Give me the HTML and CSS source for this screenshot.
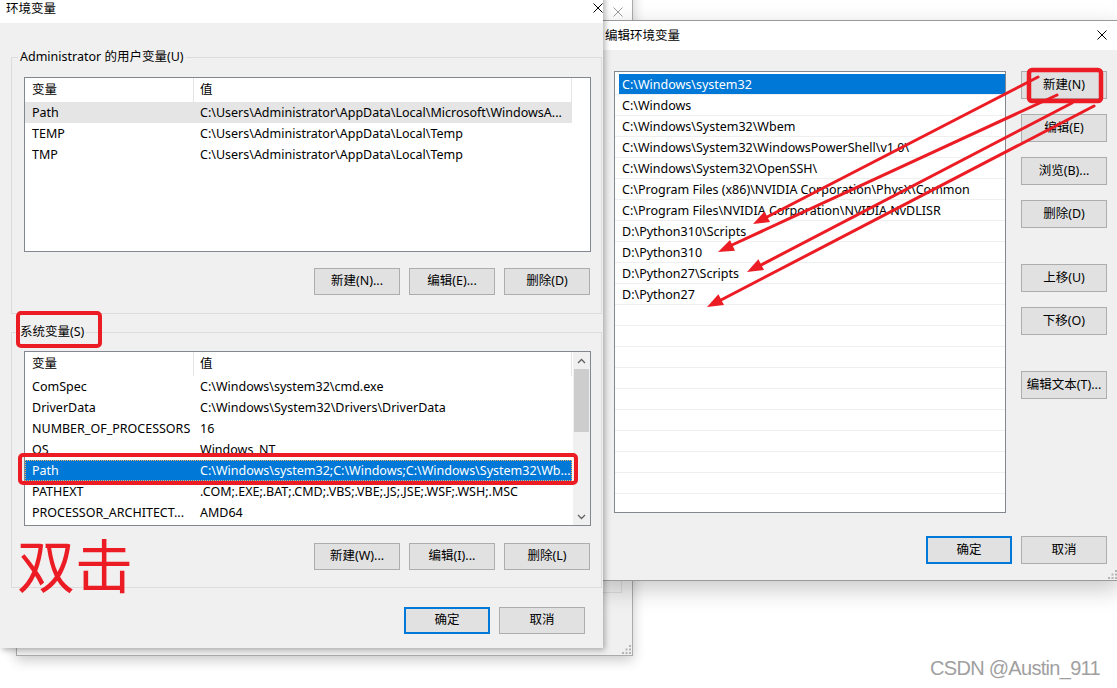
FILE: index.html
```html
<!DOCTYPE html>
<html lang="zh-CN">
<head>
<meta charset="utf-8">
<title>环境变量</title>
<link rel="stylesheet" href="styles.css">
</head>
<body>
<div class="desk">

  <div class="win back">
    <div class="back-title">
      <svg class="xicon" width="10" height="10" viewBox="0 0 10 10"><path d="M0.5 0.5L9.5 9.5M9.5 0.5L0.5 9.5" stroke="#9a9a9a" stroke-width="1"/></svg>
    </div>
    <div class="back-body">
      <div class="back-group"></div>
      <svg class="grip" width="9" height="9" viewBox="0 0 9 9"><g fill="#b4b4b4"><rect x="7" y="0" width="2" height="2"/><rect x="7" y="3.5" width="2" height="2"/><rect x="3.5" y="3.5" width="2" height="2"/><rect x="7" y="7" width="2" height="2"/><rect x="3.5" y="7" width="2" height="2"/><rect x="0" y="7" width="2" height="2"/></g></svg>
    </div>
  </div>

  <div class="win edit">
    <div class="edit-title">
      <span>编辑环境变量</span>
      <svg class="xicon" width="10" height="10" viewBox="0 0 10 10"><path d="M0.5 0.5L9.5 9.5M9.5 0.5L0.5 9.5" stroke="#000" stroke-width="1"/></svg>
    </div>
    <div class="edit-body">
      <div class="edit-main">
        <div class="elist">
          <div class="erow sel">C:\Windows\system32</div>
          <div class="erow">C:\Windows</div>
          <div class="erow">C:\Windows\System32\Wbem</div>
          <div class="erow">C:\Windows\System32\WindowsPowerShell\v1.0\</div>
          <div class="erow">C:\Windows\System32\OpenSSH\</div>
          <div class="erow">C:\Program Files (x86)\NVIDIA Corporation\PhysX\Common</div>
          <div class="erow">C:\Program Files\NVIDIA Corporation\NVIDIA NvDLISR</div>
          <div class="erow">D:\Python310\Scripts</div>
          <div class="erow">D:\Python310</div>
          <div class="erow">D:\Python27\Scripts</div>
          <div class="erow">D:\Python27</div>
          <div class="erow"></div>
          <div class="erow"></div>
          <div class="erow"></div>
          <div class="erow"></div>
          <div class="erow"></div>
          <div class="erow"></div>
          <div class="erow"></div>
          <div class="erow"></div>
          <div class="erow"></div>
          <div class="erow"></div>
        </div>
        <div class="ebtns">
          <button class="btn ebtn">新建(N)</button>
          <button class="btn ebtn gs">编辑(E)</button>
          <button class="btn ebtn gs">浏览(B)...</button>
          <button class="btn ebtn gs">删除(D)</button>
          <button class="btn ebtn gl">上移(U)</button>
          <button class="btn ebtn gs">下移(O)</button>
          <button class="btn ebtn gl">编辑文本(T)...</button>
        </div>
      </div>
      <div class="edit-foot">
        <button class="btn ebtn default">确定</button>
        <button class="btn ebtn">取消</button>
      </div>
      <svg class="grip egrip" width="9" height="9" viewBox="0 0 9 9"><g fill="#b4b4b4"><rect x="7" y="0" width="2" height="2"/><rect x="7" y="3.5" width="2" height="2"/><rect x="3.5" y="3.5" width="2" height="2"/><rect x="7" y="7" width="2" height="2"/><rect x="3.5" y="7" width="2" height="2"/><rect x="0" y="7" width="2" height="2"/></g></svg>
    </div>
  </div>

  <div class="win env">
    <div class="env-title">
      <span>环境变量</span>
      <svg class="xicon" width="10" height="10" viewBox="0 0 10 10"><path d="M0.5 0.5L9.5 9.5M9.5 0.5L0.5 9.5" stroke="#000" stroke-width="1"/></svg>
    </div>
    <div class="env-body">
      <div class="group user">
        <div class="legend"><span>Administrator 的用户变量(U)</span></div>
        <div class="vlist">
          <div class="vl-main">
            <div class="vhead"><div class="c1">变量</div><div class="c2">值</div></div>
            <div class="vrow hl"><div class="c1">Path</div><div class="c2">C:\Users\Administrator\AppData\Local\Microsoft\WindowsA...</div></div>
            <div class="vrow"><div class="c1">TEMP</div><div class="c2">C:\Users\Administrator\AppData\Local\Temp</div></div>
            <div class="vrow"><div class="c1">TMP</div><div class="c2">C:\Users\Administrator\AppData\Local\Temp</div></div>
          </div>
        </div>
        <div class="btnrow">
          <button class="btn">新建(N)...</button>
          <button class="btn">编辑(E)...</button>
          <button class="btn">删除(D)</button>
        </div>
      </div>

      <div class="group sys">
        <div class="legend"><span>系统变量(S)</span></div>
        <div class="vlist">
          <div class="vl-main">
            <div class="vhead"><div class="c1">变量</div><div class="c2">值</div></div>
            <div class="vrow"><div class="c1">ComSpec</div><div class="c2">C:\Windows\system32\cmd.exe</div></div>
            <div class="vrow"><div class="c1">DriverData</div><div class="c2">C:\Windows\System32\Drivers\DriverData</div></div>
            <div class="vrow"><div class="c1">NUMBER_OF_PROCESSORS</div><div class="c2">16</div></div>
            <div class="vrow"><div class="c1">OS</div><div class="c2">Windows_NT</div></div>
            <div class="vrow sel"><div class="c1">Path</div><div class="c2">C:\Windows\system32;C:\Windows;C:\Windows\System32\Wb...</div></div>
            <div class="vrow"><div class="c1">PATHEXT</div><div class="c2">.COM;.EXE;.BAT;.CMD;.VBS;.VBE;.JS;.JSE;.WSF;.WSH;.MSC</div></div>
            <div class="vrow"><div class="c1">PROCESSOR_ARCHITECT...</div><div class="c2">AMD64</div></div>
          </div>
          <div class="vscroll">
            <div class="sb-arrow"><svg width="9" height="6" viewBox="0 0 9 6"><path d="M1 5L4.5 1.5L8 5" fill="none" stroke="#606060" stroke-width="1.3"/></svg></div>
            <div class="sb-thumb"></div>
            <div class="sb-space"></div>
            <div class="sb-arrow"><svg width="9" height="6" viewBox="0 0 9 6"><path d="M1 1L4.5 4.5L8 1" fill="none" stroke="#606060" stroke-width="1.3"/></svg></div>
          </div>
        </div>
        <div class="btnrow">
          <button class="btn">新建(W)...</button>
          <button class="btn">编辑(I)...</button>
          <button class="btn">删除(L)</button>
        </div>
      </div>

      <div class="env-foot">
        <button class="btn default">确定</button>
        <button class="btn">取消</button>
      </div>
    </div>
  </div>

  <div class="note">双击</div>

  <svg class="marks" width="1117" height="688" viewBox="0 0 1117 688">
    <g fill="none" stroke="#ec1c24" stroke-width="4">
      <rect x="18" y="313" width="82" height="33" rx="3"/>
      <rect x="20" y="455" width="556" height="28" rx="3"/>
      <rect x="1029" y="70" width="72" height="31" rx="3" stroke-width="4.5"/>
    </g>
    <g stroke="#ec1c24" stroke-width="3" stroke-linecap="round">
      <line x1="1038" y1="77" x2="767" y2="217"/>
      <line x1="1057" y1="95" x2="732" y2="245"/>
      <line x1="1072" y1="103" x2="761" y2="265"/>
      <line x1="1094" y1="106" x2="721" y2="300"/>
    </g>
    <g fill="#ec1c24">
      <polygon points="753,224 770,222 764.5,211.4"/>
      <polygon points="718,252 735,250.7 730,239.9"/>
      <polygon points="747,272 764,269.9 758.4,259.3"/>
      <polygon points="707,307 724,304.9 718.4,294.3"/>
    </g>
  </svg>

  <div class="watermark">CSDN @Austin_911</div>
</div>
</body>
</html>
```

FILE: styles.css
```css
* { box-sizing: border-box; margin: 0; padding: 0; }
html, body { width: 1117px; height: 688px; overflow: hidden; background: #fff; }
body { font: 12.5px/1.2 "Noto Sans", "Noto Sans CJK SC", sans-serif; color: #000; }

.desk { position: relative; width: 1117px; height: 688px; overflow: hidden; background: #fff; }

.win { position: absolute; display: flex; flex-direction: column; }

.xicon { display: block; flex: none; }

/* ---------- button ---------- */
.btn {
  width: 86px; height: 27px; flex: none;
  background: #e1e1e1; border: 1px solid #adadad;
  font: inherit; color: #000; line-height: 1;
  display: flex; align-items: center; justify-content: center;
}
.btn.default { border: 2px solid #0078d7; }

/* ---------- back window ---------- */
.back {
  left: 16px; top: -30px; width: 617px; height: 686px;
  border: 1px solid #ababab; background: #f0f0f0; z-index: 1;
  box-shadow: 0 4px 12px rgba(0,0,0,.22);
}
.back-title {
  height: 50px; background: #fff; flex: none;
  display: flex; justify-content: flex-end; align-items: flex-start;
  padding: 36px 9px 0 0;
}
.back-body {
  flex: 1; display: flex; flex-direction: column;
  justify-content: flex-end; align-items: flex-end;
  padding: 0 1px 1px 0;
}
.back-group { width: 300px; height: 200px; border: 1px solid #dcdcdc; margin-right: 9px; }
.grip { display: block; flex: none; margin-top: 52px; }

/* ---------- edit dialog ---------- */
.edit {
  left: 597px; top: 20px; width: 523px; height: 561px;
  border: 1px solid #9a9a9a; background: #f0f0f0; z-index: 2;
  box-shadow: 0 8px 22px rgba(0,0,0,.22);
}
.edit-title {
  height: 29px; background: #fff; flex: none;
  display: flex; align-items: center; justify-content: space-between;
  padding: 0 12px 1px 7px;
}
.edit-body { flex: 1; display: flex; flex-direction: column; padding: 21px 12px 0 16px; }
.edit-main { display: flex; gap: 15px; }
.elist {
  width: 392px; height: 442px; flex: none; overflow: hidden;
  border: 1px solid #828790; background: #fff; padding-top: 2px;
}
.erow {
  height: 21px; line-height: 21px; white-space: nowrap; overflow: hidden;
  border-bottom: 1px solid #efefef; padding-left: 7px;
}
.erow.sel {
  background: linear-gradient(90deg, transparent 4px, #0078d7 4px);
  color: #fff;
}
.ebtns { display: flex; flex-direction: column; width: 86px; }
.ebtn { height: 28px; }
.ebtns .gs { margin-top: 15px; }
.ebtns .gl { margin-top: 36px; }
.edit-foot { display: flex; justify-content: flex-end; gap: 9px; margin-top: 23px; }
.egrip { align-self: flex-end; margin: 6px -10px 0 0; }

/* ---------- env dialog ---------- */
.env {
  left: 0; top: -7px; width: 603px; height: 655px;
  background: #f0f0f0; z-index: 3;
  box-shadow: 2px 2px 6px rgba(0,0,0,.3);
}
.env-title {
  height: 30px; background: #fff; flex: none;
  display: flex; align-items: center; justify-content: space-between;
  padding-left: 6px;
}
.env-body { flex: 1; display: flex; flex-direction: column; padding: 0 1px 0 11px; }

.group { border: 1px solid #dcdcdc; padding: 0 10px 18px 12px; }
.group.user { margin-top: 34px; }
.group.sys { margin-top: 18px; padding-bottom: 17px; }
.legend { height: 18px; line-height: 18px; margin-top: -10px; white-space: nowrap; }
.legend span { background: #f0f0f0; padding: 0 2px; margin-left: -6px; }

.vlist {
  height: 175px; border: 1px solid #828790; background: #fff;
  display: flex; margin-top: 11px;
}
.sys .vlist { margin-top: 10px; }
.vl-main { flex: 1; min-width: 0; }
.vhead, .vrow { display: flex; width: 547px; }
.vhead { height: 24px; line-height: 24px; }
.vrow { height: 21px; line-height: 21px; }
.c1 { width: 169px; padding-left: 7px; flex: none; white-space: nowrap; overflow: hidden; }
.c2 { width: 378px; padding-left: 6px; flex: none; white-space: nowrap; overflow: hidden; }
.vhead .c1, .vhead .c2 { border-right: 1px solid #e5e5e5; }
.vrow.hl { background: #e5e5e5; }
.vrow.sel { background: #0078d7; color: #fff; outline: 1px dotted #f0b060; outline-offset: -1px; }

.vscroll { width: 17px; flex: none; background: #f0f0f0; display: flex; flex-direction: column; }
.sb-arrow { height: 17px; flex: none; display: flex; align-items: center; justify-content: center; }
.sb-arrow svg { display: block; }
.sb-thumb { height: 63px; flex: none; margin: 0 1px; background: #cdcdcd; }
.sb-space { flex: 1; }

.btnrow { display: flex; justify-content: flex-end; gap: 9px; padding-right: 1px; margin-top: 16px; }
.sys .btnrow { margin-top: 17px; }
.env-foot { display: flex; justify-content: flex-end; gap: 9px; padding-right: 17px; margin-top: 19px; }

/* ---------- annotations ---------- */
.note {
  position: absolute; left: 17px; top: 530px; z-index: 4;
  font: 58px/66px "Noto Sans CJK SC", sans-serif; color: #ec1c24;
}
.marks { position: absolute; left: 0; top: 0; z-index: 5; display: block; }
.watermark {
  position: absolute; left: 930px; top: 656px; z-index: 5;
  font: 20px/24px "Liberation Sans", Arial, sans-serif; letter-spacing: -0.7px;
  color: #a0a0a0; white-space: nowrap;
  text-shadow: 0 0 1px #fff;
}
```
